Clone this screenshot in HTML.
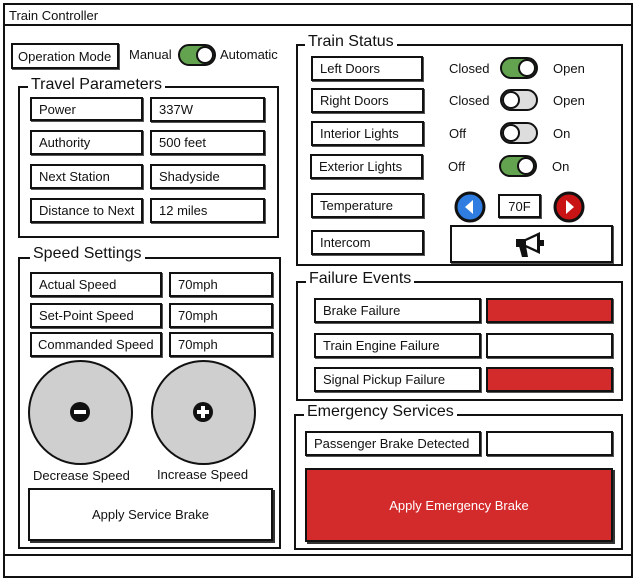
<!DOCTYPE html>
<html><head><meta charset="utf-8"><style>
*{box-sizing:border-box;margin:0;padding:0}
body{width:637px;height:583px;background:#fff;position:relative;overflow:hidden;font-family:"Liberation Sans",sans-serif;font-size:13px;color:#111}
.a{position:absolute}
.b{position:absolute;border:2px solid #111;background:#fff;box-shadow:1px 1px 0 #555;padding-left:7px;display:flex;align-items:center;white-space:nowrap}
.g{position:absolute;border:2px solid #111}
.gt{position:absolute;background:#fff;font-size:16px;padding:0 3px;line-height:16px}
.t{position:absolute;white-space:nowrap}
.tg{position:absolute;width:38px;height:22px;border:2px solid #111;border-radius:11px}
.tg i{position:absolute;top:0;width:18px;height:18px;border:2px solid #111;border-radius:50%;background:#fff}
.on{background:#63a34f}.on i{right:0}
.off{background:#ddd}.off i{left:0}
.red{background:#d32b2b}
</style></head><body>
<div class="g" style="left:3px;top:3px;width:630px;height:575px"></div>
<div class="a" style="left:3px;top:24px;width:630px;height:2px;background:#111"></div>
<div class="a" style="left:3px;top:554px;width:630px;height:2px;background:#111"></div>
<div class="t" style="left:9px;top:8px">Train Controller</div>

<div class="b" style="left:11px;top:43px;width:108px;height:26px;padding-left:5px">Operation Mode</div>
<div class="t" style="left:129px;top:47px">Manual</div>
<div class="tg on" style="left:178px;top:44px"><i></i></div>
<div class="t" style="left:220px;top:47px">Automatic</div>

<div class="g" style="left:18px;top:86px;width:261px;height:152px"></div>
<div class="gt" style="left:28px;top:77px">Travel Parameters</div>
<div class="b" style="left:30px;top:97px;width:113px;height:24px">Power</div>
<div class="b" style="left:150px;top:97px;width:115px;height:25px">337W</div>
<div class="b" style="left:30px;top:130px;width:113px;height:25px">Authority</div>
<div class="b" style="left:150px;top:130px;width:115px;height:25px">500 feet</div>
<div class="b" style="left:30px;top:164px;width:113px;height:25px">Next Station</div>
<div class="b" style="left:150px;top:164px;width:115px;height:25px">Shadyside</div>
<div class="b" style="left:30px;top:198px;width:113px;height:25px">Distance to Next</div>
<div class="b" style="left:150px;top:198px;width:115px;height:25px">12 miles</div>

<div class="g" style="left:18px;top:257px;width:263px;height:292px"></div>
<div class="gt" style="left:30px;top:246px">Speed Settings</div>
<div class="b" style="left:30px;top:272px;width:132px;height:25px">Actual Speed</div>
<div class="b" style="left:169px;top:272px;width:104px;height:25px">70mph</div>
<div class="b" style="left:30px;top:303px;width:132px;height:25px">Set-Point Speed</div>
<div class="b" style="left:169px;top:303px;width:104px;height:25px">70mph</div>
<div class="b" style="left:30px;top:332px;width:132px;height:25px;padding-left:6px">Commanded Speed</div>
<div class="b" style="left:169px;top:332px;width:104px;height:25px">70mph</div>
<div class="a" style="left:28px;top:360px;width:105px;height:105px;border:2px solid #111;border-radius:50%;background:#cfcfcf"></div>
<div class="a" style="left:151px;top:360px;width:105px;height:105px;border:2px solid #111;border-radius:50%;background:#cfcfcf"></div>
<svg class="a" style="left:69px;top:401px" width="22" height="22"><circle cx="11" cy="11" r="10" fill="#111"/><rect x="5" y="9" width="12" height="4" fill="#fff"/></svg>
<svg class="a" style="left:192px;top:401px" width="22" height="22"><circle cx="11" cy="11" r="10" fill="#111"/><rect x="5" y="9" width="12" height="4" fill="#fff"/><rect x="9" y="5" width="4" height="12" fill="#fff"/></svg>
<div class="t" style="left:33px;top:468px">Decrease Speed</div>
<div class="t" style="left:157px;top:467px">Increase Speed</div>
<div class="b" style="left:28px;top:488px;width:245px;height:53px;justify-content:center;padding:0;box-shadow:2px 2px 0 #333">Apply Service Brake</div>

<div class="g" style="left:296px;top:44px;width:327px;height:222px"></div>
<div class="gt" style="left:305px;top:34px">Train Status</div>
<div class="b" style="left:311px;top:56px;width:112px;height:25px">Left Doors</div>
<div class="t" style="left:449px;top:61px">Closed</div><div class="tg on" style="left:500px;top:57px"><i></i></div><div class="t" style="left:553px;top:61px">Open</div>
<div class="b" style="left:311px;top:88px;width:113px;height:25px">Right Doors</div>
<div class="t" style="left:449px;top:93px">Closed</div><div class="tg off" style="left:500px;top:89px"><i></i></div><div class="t" style="left:553px;top:93px">Open</div>
<div class="b" style="left:311px;top:121px;width:113px;height:25px">Interior Lights</div>
<div class="t" style="left:449px;top:126px">Off</div><div class="tg off" style="left:500px;top:122px"><i></i></div><div class="t" style="left:553px;top:126px">On</div>
<div class="b" style="left:310px;top:154px;width:113px;height:25px">Exterior Lights</div>
<div class="t" style="left:448px;top:159px">Off</div><div class="tg on" style="left:499px;top:155px"><i></i></div><div class="t" style="left:552px;top:159px">On</div>
<div class="b" style="left:311px;top:193px;width:113px;height:25px">Temperature</div>
<svg class="a" style="left:454px;top:191px" width="32" height="32"><circle cx="16" cy="16" r="14" fill="#2f7de1" stroke="#111" stroke-width="3"/><path d="M19 9 L11 16 L19 23Z" fill="#fff"/></svg>
<div class="b" style="left:498px;top:194px;width:43px;height:24px;justify-content:center;padding:0">70F</div>
<svg class="a" style="left:553px;top:191px" width="32" height="32"><circle cx="16" cy="16" r="14" fill="#c81414" stroke="#111" stroke-width="3"/><path d="M13 9 L21 16 L13 23Z" fill="#fff"/></svg>
<div class="b" style="left:311px;top:230px;width:113px;height:25px">Intercom</div>
<div class="b" style="left:450px;top:225px;width:163px;height:38px;justify-content:center;padding:0">
<svg width="34" height="28" viewBox="0 0 34 28"><path d="M1 9 H10 L25 2 V24 L10 17 H1Z" fill="#111"/><path d="M11 11 L22 6 V20 L11 15Z" fill="#fff"/><path d="M4 16 L11 16 L13 27 L7 27Z" fill="#111"/><rect x="25" y="10" width="4" height="6" fill="#111"/></svg></div>

<div class="g" style="left:296px;top:281px;width:327px;height:120px"></div>
<div class="gt" style="left:306px;top:271px">Failure Events</div>
<div class="b" style="left:314px;top:298px;width:167px;height:25px">Brake Failure</div>
<div class="b red" style="left:486px;top:298px;width:127px;height:25px"></div>
<div class="b" style="left:314px;top:333px;width:167px;height:25px">Train Engine Failure</div>
<div class="b" style="left:486px;top:333px;width:127px;height:25px"></div>
<div class="b" style="left:314px;top:367px;width:167px;height:25px">Signal Pickup Failure</div>
<div class="b red" style="left:486px;top:367px;width:127px;height:25px"></div>

<div class="g" style="left:294px;top:414px;width:329px;height:136px"></div>
<div class="gt" style="left:304px;top:404px">Emergency Services</div>
<div class="b" style="left:305px;top:431px;width:176px;height:25px">Passenger Brake Detected</div>
<div class="b" style="left:486px;top:431px;width:127px;height:25px"></div>
<div class="b red" style="left:305px;top:468px;width:308px;height:74px;justify-content:center;padding:0;color:#fff;box-shadow:2px 2px 0 #333">Apply Emergency Brake</div>
</body></html>
